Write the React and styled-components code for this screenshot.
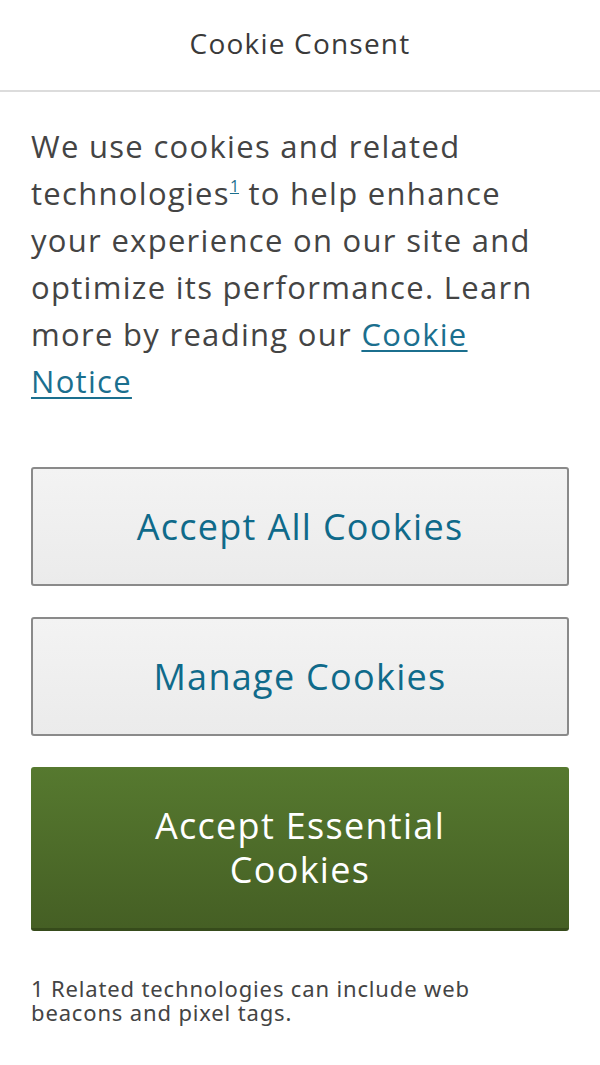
import React from "react";
import styled, { createGlobalStyle } from "styled-components";

const Global = createGlobalStyle`
  html, body { margin: 0; padding: 0; background: #fff; }
  body { font-family: "Open Sans", Lato, sans-serif; -webkit-font-smoothing: antialiased; }
  * { box-sizing: border-box; }
`;

const Page = styled.div`
  width: 600px;
  min-height: 1065px;
  background: #fff;
`;

const Header = styled.header`
  height: 92px;
  display: flex;
  align-items: center;
  justify-content: center;
  border-bottom: 2px solid #dcdcdc;
  padding-bottom: 4px;
`;

const Title = styled.h1`
  margin: 0;
  font-size: 28px;
  font-weight: 400;
  color: #3a3a3a;
  letter-spacing: 1.2px;
`;

const Body = styled.main`
  padding: 31px 31px 30px;
  display: flex;
  flex-direction: column;
`;

const Intro = styled.p`
  margin: 0 0 62px;
  font-size: 31px;
  line-height: 47px;
  letter-spacing: 1.3px;
  color: #444;
`;

const Sup = styled.sup`
  font-size: 16px;
  line-height: 0;
  vertical-align: 13px;
  letter-spacing: 0;
  color: #1b6f8e;
  text-decoration: underline;
`;

const Link = styled.a`
  color: #1b6f8e;
  text-decoration: underline;
  text-underline-offset: 4px;
  text-decoration-thickness: 2px;
`;

const Buttons = styled.div`
  display: flex;
  flex-direction: column;
  gap: 31px;
`;

const Button = styled.button`
  width: 100%;
  min-height: ${(p) => (p.$primary ? "164px" : "119px")};
  padding: ${(p) => (p.$primary ? "0 90px" : "0 20px")};
  font-family: "Open Sans", Lato, sans-serif;
  font-size: 36px;
  line-height: 44px;
  font-weight: 500;
  letter-spacing: 1.3px;
  border-radius: 3px;
  cursor: pointer;
  color: ${(p) => (p.$primary ? "#fff" : "#0f6a8a")};
  background: ${(p) =>
    p.$primary
      ? "linear-gradient(#56792f, #455f24)"
      : "linear-gradient(#f3f3f3, #ebebeb)"};
  border: ${(p) => (p.$primary ? "none" : "2px solid #8a8a8a")};
  border-bottom: ${(p) => (p.$primary ? "3px solid #364b1b" : "2px solid #8a8a8a")};
`;

const Footnote = styled.p`
  margin: 45px 0 0;
  max-width: 490px;
  font-family: "Noto Sans", "Open Sans", sans-serif;
  font-size: 22px;
  line-height: 24px;
  letter-spacing: 0.85px;
  color: #444;
`;

export default function App() {
  return (
    <Page>
      <Global />
      <Header>
        <Title>Cookie Consent</Title>
      </Header>
      <Body>
        <Intro>
          We use cookies and related technologies<Sup>1</Sup> to help enhance
          your experience on our site and optimize its performance. Learn more
          by reading our <Link href="#">Cookie Notice</Link>
        </Intro>
        <Buttons>
          <Button>Accept All Cookies</Button>
          <Button>Manage Cookies</Button>
          <Button $primary>Accept Essential Cookies</Button>
        </Buttons>
        <Footnote>
          1 Related technologies can include web beacons and pixel tags.
        </Footnote>
      </Body>
    </Page>
  );
}
